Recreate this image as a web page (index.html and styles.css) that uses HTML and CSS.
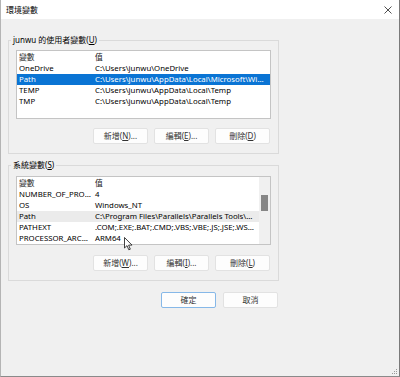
FILE: index.html
```html
<!DOCTYPE html>
<html lang="zh-Hant">
<head>
    <meta charset="UTF-8">
    <title>環境變數</title>
    <link rel="stylesheet" href="styles.css">
</head>
<body>
    <div class="window">
        <div class="titlebar">
            <span class="title">環境變數</span>
            <svg class="close" width="8" height="8" viewBox="0 0 8 8">
                <path d="M0.5 0.5 L7.5 7.5 M7.5 0.5 L0.5 7.5" stroke="#222" stroke-width="0.8" fill="none"/>
            </svg>
        </div>

        <div class="content">
            <!-- user variables -->
            <fieldset class="group group-user">
                <legend>junwu 的使用者變數(<u>U</u>)</legend>
                <div class="listbox">
                    <div class="list-body">
                        <table class="vars">
                            <colgroup><col class="col-name"><col></colgroup>
                            <thead>
                                <tr><th>變數</th><th>值</th></tr>
                            </thead>
                            <tbody>
                                <tr><td>OneDrive</td><td>C:\Users\junwu\OneDrive</td></tr>
                                <tr class="selected"><td>Path</td><td>C:\Users\junwu\AppData\Local\Microsoft\WindowsApps;</td></tr>
                                <tr><td>TEMP</td><td>C:\Users\junwu\AppData\Local\Temp</td></tr>
                                <tr><td>TMP</td><td>C:\Users\junwu\AppData\Local\Temp</td></tr>
                            </tbody>
                        </table>
                    </div>
                </div>
                <div class="btn-row">
                    <button>新增(<u>N</u>)...</button>
                    <button>編輯(<u>E</u>)...</button>
                    <button>刪除(<u>D</u>)</button>
                </div>
            </fieldset>

            <!-- system variables -->
            <fieldset class="group group-system">
                <legend>系統變數(<u>S</u>)</legend>
                <div class="listbox">
                    <div class="list-body">
                        <table class="vars">
                            <colgroup><col class="col-name"><col></colgroup>
                            <thead>
                                <tr><th>變數</th><th>值</th></tr>
                            </thead>
                            <tbody>
                                <tr><td>NUMBER_OF_PROCESSORS</td><td>4</td></tr>
                                <tr><td>OS</td><td>Windows_NT</td></tr>
                                <tr class="hover"><td>Path</td><td>C:\Program Files\Parallels\Parallels Tools\Applications;C:\Windows\system32</td></tr>
                                <tr><td>PATHEXT</td><td>.COM;.EXE;.BAT;.CMD;.VBS;.VBE;.JS;.JSE;.WSF;.WSH;.MSC</td></tr>
                                <tr><td>PROCESSOR_ARCHITECTURE</td><td>ARM64</td></tr>
                            </tbody>
                        </table>
                    </div>
                    <div class="scrollbar"><div class="thumb"></div></div>
                </div>
                <div class="btn-row btn-row-sys">
                    <button>新增(<u>W</u>)...</button>
                    <button>編輯(<u>I</u>)...</button>
                    <button>刪除(<u>L</u>)</button>
                </div>
            </fieldset>

            <div class="dialog-btns">
                <button class="default">確定</button>
                <button>取消</button>
            </div>
        </div>

        <!-- mouse pointer over the list -->
        <svg class="cursor" width="9" height="14" viewBox="0 0 9 14">
            <path d="M0.5 0.5 L0.5 11 L3 8.6 L4.8 12.8 L6.3 12.2 L4.6 8.1 L8 8.1 Z" fill="#fff" stroke="#111" stroke-width="0.8" stroke-linejoin="round"/>
        </svg>

        <svg class="grip" width="6" height="6" viewBox="0 0 6 6">
            <rect x="4" y="0" width="1" height="1" fill="#999"/>
            <rect x="2" y="2" width="1" height="1" fill="#999"/>
            <rect x="4" y="2" width="1" height="1" fill="#999"/>
            <rect x="0" y="4" width="1" height="1" fill="#999"/>
            <rect x="2" y="4" width="1" height="1" fill="#999"/>
            <rect x="4" y="4" width="1" height="1" fill="#999"/>
        </svg>
    </div>
</body>
</html>
```

FILE: styles.css
```css
body {
    margin: 0;
    padding: 0;
    background: #f0f0f0;
    font-family: 'Noto Sans', 'Noto Sans CJK TC', sans-serif;
    font-size: 7.8px;
    color: #000;
}
.window {
    position: relative;
    width: 400px;
    height: 377px;
    box-sizing: border-box;
    background: #f0f0f0;
    border-left: 1px solid #b4b4b4;
    border-right: 1px solid #7a7a7a;
    border-bottom: 1px solid #8a8a8a;
    overflow: hidden;
}
.titlebar {
    height: 19px;
    background: #fff;
    display: flex;
    align-items: center;
    justify-content: space-between;
    padding: 0 7px 0 5px;
}
.title {
    font-size: 8px;
    line-height: 19px;
}
.content {
    display: flex;
    flex-direction: column;
}
.group {
    margin: 0 0 0 7px;
    width: 271px;
    box-sizing: border-box;
    border: 1px solid #dadada;
    padding: 4px 7px 9px 7px;
    min-inline-size: 0;
}
.group legend {
    padding: 0 2px;
    margin-left: -5px;
    line-height: 12px;
    font-size: 8px;
}
.group-user {
    margin-top: 15px;
}
.group-system {
    margin-top: 5px;
    padding-top: 5px;
}
.listbox {
    display: flex;
    height: 69px;
    box-sizing: border-box;
    background: #fff;
    border: 1px solid #c4c4c4;
    overflow: hidden;
}
.list-body {
    flex: 1;
    min-width: 0;
}
.vars {
    width: 100%;
    border-collapse: collapse;
    table-layout: fixed;
}
.vars .col-name {
    width: 76px;
}
.vars th, .vars td {
    padding: 0 2px;
    font-weight: normal;
    text-align: left;
    white-space: nowrap;
    overflow: hidden;
    text-overflow: ellipsis;
    line-height: 11px;
    height: 11px;
}
.vars th {
    height: 12px;
    line-height: 12px;
    color: #222;
}
.vars tr.selected td {
    background: #0a74d4;
    color: #fff;
}
.vars tr.hover td {
    background: #ebebeb;
}
.scrollbar {
    width: 11px;
    background: #f0f0f0;
    display: flex;
    flex-direction: column;
}
.thumb {
    margin: 18px 0 0 2px;
    width: 7px;
    height: 16px;
    background: #868686;
}
.btn-row {
    display: flex;
    justify-content: flex-end;
    gap: 6px;
    margin-top: 9px;
    padding-right: 1px;
}
.btn-row-sys {
    margin-top: 10px;
}
button {
    width: 55px;
    height: 16px;
    padding: 0;
    font-family: 'Noto Sans', 'Noto Sans CJK TC', sans-serif;
    font-size: 8px;
    line-height: 14px;
    color: #333;
    background: #fdfdfd;
    border: 1px solid #e2e2e2;
    border-radius: 2px;
}
button.default {
    border-color: #86b8e8;
}
.dialog-btns {
    display: flex;
    justify-content: flex-end;
    gap: 7px;
    width: 270px;
    margin: 11px 0 0 7px;
}
.cursor {
    position: absolute;
    left: 123px;
    top: 237px;
}
.grip {
    position: absolute;
    right: 1px;
    bottom: 1px;
}
```
